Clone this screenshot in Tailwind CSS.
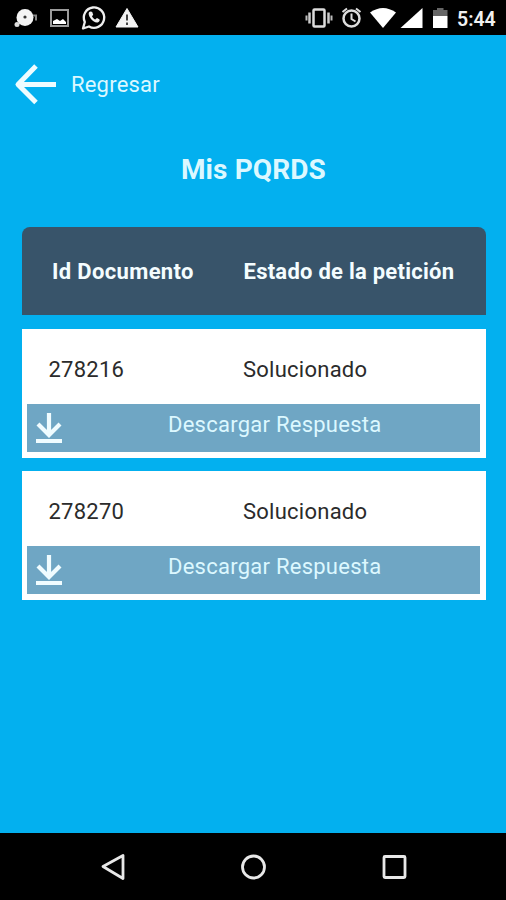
<!DOCTYPE html>
<html lang="es">
<head>
  <meta charset="UTF-8" />
  <meta name="viewport" content="width=device-width, initial-scale=1.0" />
  <title>Mis PQRDS</title>
  <script src="https://cdn.jsdelivr.net/npm/@tailwindcss/browser@4"></script>
</head>
<body class="bg-[#03b0ef] font-[Roboto,sans-serif]">
  <div class="flex flex-col w-[506px] h-[900px] overflow-hidden">
    <!-- Status bar -->
    <div class="h-[35px] shrink-0 bg-black text-[#f0f0f0] flex items-center justify-between">
      <svg class="w-[150px] h-[35px]" viewBox="0 0 150 35" fill="none">
        <ellipse cx="25" cy="17.5" rx="8.5" ry="8.5" fill="#f4f4f4" />
        <circle cx="25" cy="17" r="1.6" fill="#333" />
        <circle cx="17" cy="24.5" r="2.5" fill="#ddd" />
        <path d="M33 15.500h3v5" stroke="#888" stroke-width="2" />
        <rect x="51" y="10" width="17" height="16" stroke="#9c9c9c" stroke-width="2" />
        <path d="M53 24v-3l4-2 3 2 3-2 3 3v2z" fill="#fff" />
        <path d="M83 28.500l1.800-6.500a10.200 10.200 0 1 1 4.200 4.500z" stroke="#eee" stroke-width="2.300" stroke-linejoin="round" />
        <path d="M89.200 12c-2.500 3 4 11.500 8.500 10.500 2-.6 2.500-2.800 1.600-3.300l-2.300-1.200-1.800 1.500c-1.600-.7-2.600-2-3.200-3.300l1.200-1.500-1-2.700c-.6-.7-2.200-.7-3 0z" fill="#eee" />
        <path d="M127 8.500l11 18.500h-22z" fill="#f4f4f4" stroke="#f4f4f4" stroke-linejoin="round" />
        <path d="M127 14.500v6M127 22.500v2.500" stroke="#444" stroke-width="2" />
      </svg>
      <div class="flex items-center">
        <svg class="w-[152px] h-[35px]" viewBox="305 0 152 35" fill="none">
          <rect x="313.500" y="9.500" width="11" height="17" rx="1" stroke="#ddd" stroke-width="2.500" />
          <path d="M309.500 12.500v11M328.500 12.500v11" stroke="#ccc" stroke-width="2.500" />
          <path d="M306.500 15.500v5M331.500 15.500v5" stroke="#bbb" stroke-width="2" />
          <circle cx="351.500" cy="18.500" r="8" stroke="#ddd" stroke-width="2.500" />
          <path d="M351.500 13.500v5.500l4 2.500M342.500 12l4.500-3.500M360.500 12l-4.500-3.500" stroke="#ddd" stroke-width="2" />
          <path d="M370 12.500q13-9 26 0l-13 15.500z" fill="#fff" />
          <path d="M422.500 8v20h-22z" fill="#fff" />
          <path d="M433 16v-6h4v-2h6.500v2h4v6z" fill="#666" />
          <path d="M433 16h14.500v12h-14.500z" fill="#fff" />
        </svg>
        <span class="w-[49px] text-[19.500px] leading-[35px] font-semibold pt-[3px] whitespace-nowrap">5:44</span>
      </div>
    </div>

    <main class="flex-1 px-[22px] text-[#dcf8ff]">
      <div class="flex items-center h-[98px] -ml-2 gap-3.5">
        <svg class="w-[43px] h-[44px] shrink-0" viewBox="0 0 43 44" fill="none" stroke="#effcff" stroke-width="5">
          <path d="M22 4L4 22.500l18 18M4 22.500h38" stroke-linejoin="round" />
        </svg>
        <span class="pt-0.5 text-[22px] leading-7 tracking-[0.2px]">Regresar</span>
      </div>

      <h1 class="h-[94px] pt-[21px] pl-[159px] text-[28px] leading-[32px] font-bold tracking-[0.1px]">Mis PQRDS</h1>

      <div class="flex items-center w-[464px] h-[88px] rounded-t-lg bg-[#38546a] text-[22px] font-bold tracking-[0.25px] text-[#f4fdff] whitespace-nowrap">
        <span class="w-[221.500px] pl-[30px] tracking-[0.35px]">Id Documento</span>
        <span>Estado de la petición</span>
      </div>

      <div class="flex flex-col gap-[13px] mt-3.5 w-[464px]">
        <div class="h-[129px] bg-white px-[5px] pb-[5px]">
          <div class="flex h-[75px] pt-[26px] text-[22px] leading-[30px] tracking-[0.25px] text-[#2b2b2b]">
            <span class="w-[216px] pl-[21.500px]">278216</span>
            <span>Solucionado</span>
          </div>
          <div class="flex w-[453px] h-[48px] bg-[#6fa6c4]">
            <svg class="w-[44px] h-[48px] shrink-0" viewBox="0 0 44 48" fill="none" stroke="#f0fcff" stroke-width="4.200">
              <path d="M22 9v22M11 20l11 11 11-11M9 37h26" />
            </svg>
            <span class="pl-[97px] pt-[6px] text-[22px] leading-[30px] tracking-[0.25px] whitespace-nowrap">Descargar Respuesta</span>
          </div>
        </div>
        <div class="h-[129px] bg-white px-[5px] pb-[5px]">
          <div class="flex h-[75px] pt-[26px] text-[22px] leading-[30px] tracking-[0.25px] text-[#2b2b2b]">
            <span class="w-[216px] pl-[21.500px]">278270</span>
            <span>Solucionado</span>
          </div>
          <div class="flex w-[453px] h-[48px] bg-[#6fa6c4]">
            <svg class="w-[44px] h-[48px] shrink-0" viewBox="0 0 44 48" fill="none" stroke="#f0fcff" stroke-width="4.200">
              <path d="M22 9v22M11 20l11 11 11-11M9 37h26" />
            </svg>
            <span class="pl-[97px] pt-[6px] text-[22px] leading-[30px] tracking-[0.25px] whitespace-nowrap">Descargar Respuesta</span>
          </div>
        </div>
      </div>
    </main>

    <!-- Navigation bar -->
    <div class="h-[67px] shrink-0 bg-black">
      <svg class="w-[506px] h-[67px]" viewBox="0 0 506 67" fill="none" stroke="#e8e8e8" stroke-width="2.800" stroke-linejoin="round">
        <path d="M123 22.500v23l-20-12z" />
        <circle cx="253.500" cy="34" r="11" />
        <rect x="384" y="23.500" width="21" height="21" rx="1" />
      </svg>
    </div>
  </div>
</body>
</html>
